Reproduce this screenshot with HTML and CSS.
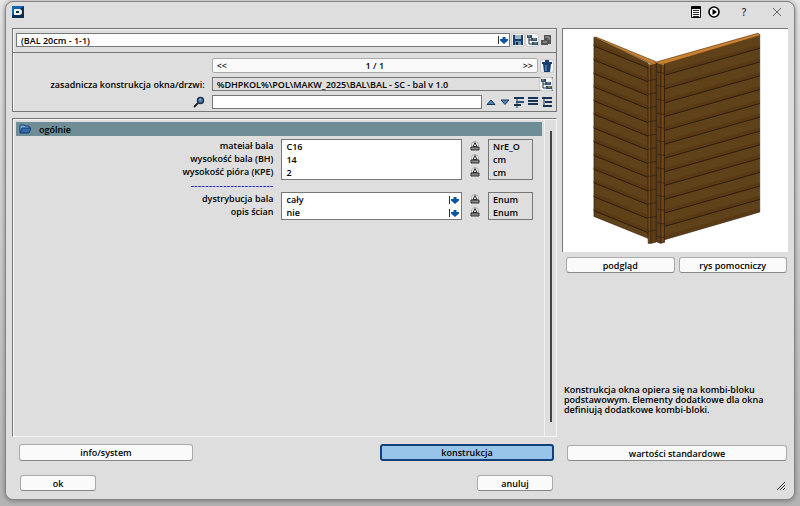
FILE: index.html
```html
<!DOCTYPE html>
<html lang="pl">
<head>
  <meta charset="UTF-8">
  <meta name="viewport" content="width=device-width, initial-scale=1.0">
  <title>BAL 20cm</title>
  <link rel="stylesheet" href="styles.css">
</head>
<body>
  <svg class="symbols" aria-hidden="true">
    <symbol id="drop" viewBox="0 0 8 8"><path d="M2.500 1h3v2H8v1.500L4 8 0 4.500V3h2.500z" fill="#0b55a5"/></symbol>
    <symbol id="tree" viewBox="0 0 12 12"><path d="M1 1h5v3H1zM5 4h6v3H5zM6 8h6v3H6z" fill="#2c4f78"/><path d="M3 4v6h3M3 6h2" fill="none" stroke="#333"/><path d="M2 2h2M7 5h3M8 9h3" stroke="#a9a15c"/></symbol>
    <symbol id="clear" viewBox="0 0 10 10"><circle cx="5" cy="4" r="3.500" fill="#f2f2f2" stroke="#aaa"/><path d="M5 1.500L3 5.500h4z" fill="#ddd" stroke="#333"/><path d="M1 6h8v3H1z" fill="#888" stroke="#333"/></symbol>
  </svg>

  <main class="window">
    <header class="titlebar">
      <svg class="logo" viewBox="0 0 12 12"><path d="M0 0h12v12H0z" fill="#0c2f55"/><path d="M0 0h12L0 9z" fill="#1263b5"/><path d="M2 3h5q3 0 3 3t-3 3H2z" fill="#f4f4e8"/><path d="M4 5h3v2H4z" fill="#0c2f55"/></svg>
      <div class="title-tools">
        <button class="icon-btn" aria-label="Lista"><svg class="glyph" viewBox="0 0 12 12"><path d="M1.500 .5h9v11h-9z" fill="#fff" stroke="#000"/><path d="M2 1h8v2H2z"/><path d="M3 4.500h6M3 6.500h6M3 8.500h6M3 10.500h6" stroke="#222"/></svg></button>
        <button class="icon-btn" aria-label="Start"><svg class="glyph" viewBox="0 0 12 12"><circle cx="6" cy="6" r="5" fill="#fff" stroke="#000" stroke-width="1.600"/><path d="M4.500 3l4.500 3-4.500 3z"/></svg></button>
        <button class="icon-btn help" aria-label="Pomoc">?</button>
        <button class="icon-btn" aria-label="Zamknij"><svg class="glyph" viewBox="0 0 12 12"><path d="M2 2l8 8M10 2l-8 8" stroke="#666"/></svg></button>
      </div>
    </header>

    <div class="content">
      <section class="left">
        <div class="panel selector">
          <div class="variant">
            <span class="select-wrap">
              <select aria-label="Wariant"><option>(BAL 20cm - 1-1)</option></select>
              <svg class="arrow"><use href="#drop"/></svg>
            </span>
            <button class="icon-btn boxed" aria-label="Zapisz"><svg class="glyph" viewBox="0 0 12 12"><path d="M1 1h10v10H1z" fill="#173f70"/><path d="M3 1h6v4H3z" fill="#9fb4c9"/><path d="M3 7h6v4H3z" fill="#6f91b1"/><path d="M4 8h2v3H4z" fill="#102c50"/></svg></button>
            <button class="icon-btn boxed" aria-label="Drzewo"><svg class="glyph"><use href="#tree"/></svg></button>
            <button class="icon-btn" aria-label="Import"><svg class="glyph" viewBox="0 0 12 12"><path d="M4 1h7v9H8v1H1V6h3z" fill="#555"/><path d="M5 3h4v3M3 8h4" fill="none" stroke="#aaa"/></svg></button>
          </div>

          <div class="details">
            <div class="nav-row">
              <div class="pager">
                <button aria-label="Poprzedni">&lt;&lt;</button>
                <span>1 / 1</span>
                <button aria-label="Następny">&gt;&gt;</button>
              </div>
              <button class="icon-btn boxed" aria-label="Usuń"><svg class="glyph" viewBox="0 0 12 12"><path d="M4 1h4M1 3h10" stroke="#173f70" stroke-width="2"/><path d="M2 4h8l-1 8H3z" fill="#173f70"/><path d="M5 5v6" stroke="#7fa3c8"/></svg></button>
            </div>

            <label for="path">zasadnicza konstrukcja okna/drzwi:</label>
            <div class="path">
              <input id="path" type="text" readonly value="%DHPKOL%\POL\MAKW_2025\BAL\BAL - SC - bal v 1.0">
              <button class="icon-btn boxed" aria-label="Wybierz"><svg class="glyph"><use href="#tree"/></svg></button>
            </div>

            <label for="search" aria-label="Szukaj"><svg class="glyph" viewBox="0 0 12 12"><path d="M1 11l4-4" stroke="#222" stroke-width="2"/><circle cx="7.500" cy="4.500" r="3" fill="#477eaf" stroke="#222e46" stroke-width="1.400"/><path d="M6 4l2-1" stroke="#bdd9ee"/></svg></label>
            <div class="search-row">
              <input id="search" type="text">
              <button class="icon-btn" aria-label="W górę"><svg class="glyph" viewBox="0 0 12 12"><path d="M2 8.500h8L6 4z" fill="#4a86bb" stroke="#1d3557"/></svg></button>
              <button class="icon-btn" aria-label="W dół"><svg class="glyph" viewBox="0 0 12 12"><path d="M2 4h8L6 8.500z" fill="#4a86bb" stroke="#1d3557"/></svg></button>
              <button class="icon-btn" aria-label="Zwiń"><svg class="glyph" viewBox="0 0 12 12"><path d="M1 2h10M1 9h7" stroke="#173454" stroke-width="2"/><path d="M3 5.500h8M4 2v10" stroke="#173454"/><path d="M3 5h8v2H3z" fill="#2c527c"/></svg></button>
              <button class="icon-btn" aria-label="Lista"><svg class="glyph" viewBox="0 0 12 12"><path d="M1 2h10M1 5h10M1 8h10" stroke="#173454" stroke-width="2"/></svg></button>
              <button class="icon-btn" aria-label="Rozwiń"><svg class="glyph" viewBox="0 0 12 12"><path d="M1 2h10M4 6h7M2 10h9" stroke="#173454" stroke-width="2"/><path d="M3 2v8" stroke="#173454"/></svg></button>
            </div>
          </div>
        </div>

        <div class="panel params">
          <div class="param-list">
            <h2><svg class="folder" viewBox="0 0 12 10"><path d="M1 9V1h4l1 1h4v2" fill="#7eaed8" stroke="#173f70"/><path d="M1 9l2-5h9l-2 5z" fill="#2d6ba9" stroke="#173f70"/></svg>ogólnie</h2>

            <div class="group">
              <div class="names">
                <label for="material">mateiał bala</label>
                <label for="height">wysokość bala (BH)</label>
                <label for="tongue">wysokość pióra (KPE)</label>
              </div>
              <div class="fields">
                <input id="material" type="text" value="C16">
                <input id="height" type="text" value="14">
                <input id="tongue" type="text" value="2">
              </div>
              <div class="clears">
                <button class="icon-btn" aria-label="Wyczyść"><svg><use href="#clear"/></svg></button>
                <button class="icon-btn" aria-label="Wyczyść"><svg><use href="#clear"/></svg></button>
                <button class="icon-btn" aria-label="Wyczyść"><svg><use href="#clear"/></svg></button>
              </div>
              <div class="units"><span>NrE_O</span><span>cm</span><span>cm</span></div>
            </div>

            <div class="group divider"><span>-----------------------</span></div>

            <div class="group">
              <div class="names">
                <label for="distribution">dystrybucja bala</label>
                <label for="walls">opis ścian</label>
              </div>
              <div class="fields">
                <span class="select-wrap">
                  <select id="distribution"><option>cały</option></select>
                  <svg class="arrow"><use href="#drop"/></svg>
                </span>
                <span class="select-wrap">
                  <select id="walls"><option>nie</option></select>
                  <svg class="arrow"><use href="#drop"/></svg>
                </span>
              </div>
              <div class="clears">
                <button class="icon-btn" aria-label="Wyczyść"><svg><use href="#clear"/></svg></button>
                <button class="icon-btn" aria-label="Wyczyść"><svg><use href="#clear"/></svg></button>
              </div>
              <div class="units"><span>Enum</span><span>Enum</span></div>
            </div>
          </div>
          <div class="scroll"><div class="thumb"></div></div>
        </div>

        <div class="tabs">
          <button class="btn">info/system</button>
          <button class="btn active">konstrukcja</button>
        </div>
      </section>

      <aside class="right">
        <div class="preview">
          <svg viewBox="9 29 676 670" role="img" aria-label="Ściana z bali">
            <path d="M102 54l163 78v526L102 592z" fill="#5f411a" stroke="#38230c" stroke-width="2"/>
            <path d="M312 132L600 47v532l-286 83z" fill="#5f411a" stroke="#38230c" stroke-width="2"/>
            <path d="M102 74l163 66M102 116l163 66M102 157l163 66M102 197l163 66M102 239l163 66M102 279l163 66M102 321l163 66M102 362l163 66M102 403l163 66M102 444l163 66M102 485l163 66M102 527l163 66M102 569l163 66M314 162l286-81M314 203l286-81M314 245l286-81M314 286l286-81M314 328l286-81M314 369l286-81M314 411l286-81M314 452l286-81M314 493l286-81M314 535l286-81M314 576l286-81M314 616l286-81M314 654l286-81" stroke="#5a3a15" stroke-width="10"/>
            <path d="M102 80l163 66M102 122l163 66M102 163l163 66M102 203l163 66M102 245l163 66M102 285l163 66M102 327l163 66M102 368l163 66M102 409l163 66M102 450l163 66M102 491l163 66M102 533l163 66M102 575l163 66" stroke="#2c1c0a" stroke-width="3"/>
            <path d="M314 168l286-81M314 209l286-81M314 251l286-81M314 292l286-81M314 334l286-81M314 375l286-81M314 417l286-81M314 458l286-81M314 499l286-81M314 541l286-81M314 582l286-81M314 622l286-81" stroke="#2c1c0a" stroke-width="3"/>
            <path d="M102 54l6-1 182 75 304-86 6 3v4L304 137l-18-3-8 1z" fill="#c9812f" stroke="#5b3710" stroke-width="2"/>
            <path d="M265 136l24-5v538l-15 4h-9zM290 131l24 5v534l-12 3-12-5z" fill="#5e3d17" stroke="#2c1c0a" stroke-width="2"/>
            <path d="M269 138v532M308 138v532" stroke="#75491d" stroke-width="5"/>
            <path d="M273 138v533M303 138v533" stroke="#2c1c0a" stroke-width="2"/>
            <path d="M266 137l22-6M292 130l20 6" stroke="#bc7930" stroke-width="4"/>
            <path d="M265 184l24-4M265 225l24-4M265 266l24-4M265 308l24-4M265 349l24-4M265 390l24-4M265 431l24-4M265 472l24-4M265 514l24-4M265 555l24-4M265 596l24-4M265 637l24-4M290 158l24 4M290 199l24 4M290 240l24 4M290 282l24 4M290 323l24 4M290 364l24 4M290 405l24 4M290 446l24 4M290 488l24 4M290 529l24 4M290 570l24 4M290 611l24 4M290 652l24 4" stroke="#2c1c0a" stroke-width="2"/>
          </svg>
        </div>
        <div class="preview-buttons">
          <button class="btn">podgląd</button>
          <button class="btn">rys pomocniczy</button>
        </div>
        <p class="hint">Konstrukcja okna opiera się na kombi-bloku podstawowym. Elementy dodatkowe dla okna definiują dodatkowe kombi-bloki.</p>
        <button class="btn defaults">wartości standardowe</button>
      </aside>
    </div>

    <footer class="actions">
      <button class="btn">ok</button>
      <button class="btn">anuluj</button>
      <svg class="grip" viewBox="0 0 10 10"><path d="M1 9l8-8M4 9l5-5M7 9l2-2" stroke="#333"/></svg>
    </footer>
  </main>
</body>
</html>
```
FILE: styles.css
```css
* {
  box-sizing: border-box;
}

body {
  margin: 0;
  height: 100vh;
  padding: 1px 5px 6px 5px;
  display: flex;
  background: linear-gradient(#e6e6e6, #b4b4b4);
  font-family: "Open Sans", Tahoma, sans-serif;
  font-size: 9px;
  font-weight: 600;
  line-height: 13px;
  color: #000;
}

button,
input,
select {
  font: inherit;
  color: inherit;
  margin: 0;
  padding: 0;
  border: 0;
  border-radius: 0;
  background: none;
  min-width: 0;
}

select {
  appearance: none;
}

svg {
  display: block;
}

.symbols {
  position: absolute;
  width: 0;
  height: 0;
}

.window {
  flex: 1;
  display: flex;
  flex-direction: column;
  background: #dedede;
  border: 1px solid #858585;
  border-radius: 8px;
  box-shadow: 0 1px 5px #777;
}

.titlebar {
  height: 26px;
  padding: 0 11px 6px 6px;
  display: flex;
  align-items: center;
  justify-content: space-between;
}

.logo,
.glyph {
  width: 12px;
  height: 12px;
}

.title-tools {
  display: flex;
  gap: 6px;
}

.title-tools .help {
  margin: 0 15px 0 12px;
  font-size: 10px;
  color: #333;
}

.icon-btn {
  display: flex;
  align-items: center;
  justify-content: center;
  flex: none;
  width: 12px;
  height: 12px;
}

.boxed {
  background: #f4f4f4;
  border-radius: 2px;
  box-shadow: 0 0 0 1px #ccc;
}

.content {
  flex: 1;
  display: grid;
  grid-template-columns: 545fr 226fr;
  gap: 5px;
  padding: 0 6px;
}

.left,
.right {
  display: flex;
  flex-direction: column;
  min-width: 0;
}

.panel {
  border: 1px solid #777;
  box-shadow: inset 1px 1px #f4f4f4;
}

.variant {
  display: flex;
  align-items: center;
  gap: 2px;
  padding: 4px 4px 5px 3px;
  border-bottom: 1px solid #777;
}

.select-wrap {
  position: relative;
  flex: 1;
  display: flex;
}

.select-wrap select {
  flex: 1;
  height: 13px;
  padding: 0 18px 0 4px;
}

.variant select {
  height: 14px;
  border: 1px solid #777;
  background: #fff;
}

.arrow {
  position: absolute;
  right: 1px;
  top: 3px;
  width: 11px;
  height: 8px;
  border-left: 1px solid #333;
  pointer-events: none;
}

.details {
  display: grid;
  grid-template-columns: 192fr 342fr;
  column-gap: 7px;
  row-gap: 4px;
  align-items: center;
  padding: 5px 3px 2px 0;
}

.details label {
  justify-self: end;
}

.nav-row {
  grid-column: 2;
  display: flex;
  align-items: center;
  gap: 3px;
}

.pager {
  flex: 1;
  display: flex;
  justify-content: space-between;
  padding: 0 4px;
  border: 1px solid #aaa;
  border-radius: 2px;
  background: #fafafa;
}

.path {
  display: flex;
  align-items: center;
  height: 14px;
  border: 1px solid #777;
}

.path input {
  flex: 1;
  padding-left: 4px;
}

.search-row {
  display: flex;
  align-items: center;
  gap: 2px;
}

.search-row input {
  flex: 1;
  height: 14px;
  margin-right: 1px;
  border: 1px solid #777;
  background: #fff;
}

.params {
  flex: 1;
  display: flex;
  margin-top: 6px;
  border-color: #777 #f4f4f4 #f4f4f4 #777;
}

.param-list {
  flex: 1;
  padding: 3px 2px 0 3px;
  border-right: 1px solid #f0f0f0;
}

.param-list h2 {
  display: flex;
  align-items: center;
  gap: 8px;
  height: 14px;
  margin: 0 0 3px;
  padding-left: 3px;
  background: #6f8d96;
  font-size: 9px;
  font-weight: 600;
}

.folder {
  width: 12px;
  height: 10px;
}

.group {
  display: grid;
  grid-template-columns: 258fr 181fr 10fr 45fr 1fr;
  column-gap: 8px;
}

.names,
.fields,
.clears,
.units {
  display: flex;
  flex-direction: column;
}

.names {
  align-items: flex-end;
}

.fields,
.units {
  border: 1px solid #777;
}

.fields {
  background: #fff;
}

.fields input {
  height: 13px;
  padding-left: 4px;
}

.fields select {
  padding-right: 14px;
}

.clears .icon-btn {
  width: 10px;
  height: 13px;
}

.clears svg {
  width: 10px;
  height: 10px;
}

.units {
  padding-left: 4px;
}

.divider {
  color: #1010c0;
  font-family: "DejaVu Sans", sans-serif;
  font-size: 10px;
  font-weight: 400;
  text-align: right;
  line-height: 12px;
}

.scroll {
  width: 11px;
  padding: 12px 4px 14px 5px;
  display: flex;
}

.thumb {
  width: 2px;
  background: #444;
}

.tabs {
  display: flex;
  justify-content: space-between;
  padding: 7px 3px 0 7px;
}

.btn {
  height: 16px;
  border: 1px solid #aaa;
  border-bottom-color: #888;
  border-radius: 3px;
  background: #fafafa;
}

.tabs .btn {
  width: 174px;
  height: 17px;
}

.tabs .active {
  background: #99c4ea;
  border: 2px solid #12407a;
}

.preview {
  background: #fff;
  border-top: 1px solid #777;
  border-left: 1px solid #777;
}

.preview svg {
  width: 100%;
}

.preview-buttons {
  display: flex;
  gap: 4px;
  padding: 5px 1px 0 4px;
}

.preview-buttons .btn {
  flex: 1;
}

.hint {
  margin: auto 0 30px 2px;
  line-height: 10px;
}

.defaults {
  margin: 0 1px 0 5px;
}

.actions {
  display: flex;
  align-items: flex-end;
  padding: 14px 8px 8px 14px;
}

.actions .btn {
  width: 76px;
}

.actions .btn + .btn {
  margin-left: 381px;
}

.grip {
  width: 10px;
  height: 10px;
  margin-left: auto;
}
```
